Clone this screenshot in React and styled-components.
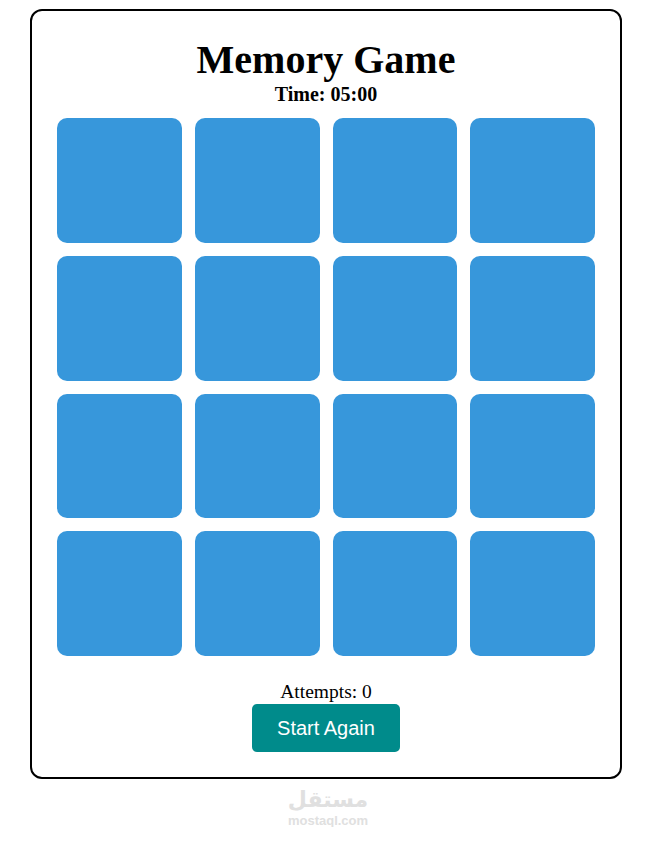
import React, { useState } from 'react'
import styled, { createGlobalStyle } from 'styled-components'

const GlobalStyle = createGlobalStyle`
  html, body {
    margin: 0;
    padding: 0;
    background: #ffffff;
    font-family: "Liberation Serif", "Times New Roman", serif;
  }
`

const Board = styled.main`
  box-sizing: border-box;
  width: 592px;
  margin: 9px 34px 0 30px;
  padding: 27px 25px 25px;
  border: 2px solid #000000;
  border-radius: 12px;
  display: flex;
  flex-direction: column;
  align-items: center;
`

const Title = styled.h1`
  margin: 0;
  font-size: 40px;
  line-height: 44px;
  font-weight: bold;
  color: #000000;
`

const Timer = styled.h3`
  margin: 0 0 12px;
  font-size: 20px;
  line-height: 24px;
  font-weight: bold;
`

const Grid = styled.div`
  width: 100%;
  display: grid;
  grid-template-columns: repeat(4, 1fr);
  gap: 13px;
`

const Card = styled.div`
  aspect-ratio: 1 / 1;
  border-radius: 10px;
  background: ${(p) => (p.$open ? '#ffffff' : '#3797db')};
  cursor: pointer;
`

const Attempts = styled.p`
  margin: 25px 0 1px;
  font-size: 19.5px;
  line-height: 22px;
`

const Button = styled.button`
  width: 148px;
  height: 48px;
  border: none;
  border-radius: 5px;
  background: #008b8b;
  color: #ffffff;
  font-family: "Liberation Sans", Arial, sans-serif;
  font-size: 20px;
  cursor: pointer;
`

const Watermark = styled.div`
  margin-top: 8px;
  display: flex;
  flex-direction: column;
  align-items: center;
  color: #e0e0e0;
  font-family: "DejaVu Sans", "Liberation Sans", sans-serif;
  font-weight: bold;
  user-select: none;
`

const Arabic = styled.span`
  font-size: 22px;
  line-height: 26px;
`

const Domain = styled.span`
  margin-top: 1px;
  font-family: "Liberation Sans", Arial, sans-serif;
  font-size: 13px;
  line-height: 13px;
`

export default function App() {
  const [attempts, setAttempts] = useState(0)
  const cards = Array.from({ length: 16 }, (_, i) => i)

  return (
    <>
      <GlobalStyle />
      <Board>
        <Title>Memory Game</Title>
        <Timer>Time: 05:00</Timer>
        <Grid>
          {cards.map((i) => (
            <Card key={i} />
          ))}
        </Grid>
        <Attempts>Attempts: {attempts}</Attempts>
        <Button onClick={() => setAttempts(0)}>Start Again</Button>
      </Board>
      <Watermark>
        <Arabic dir="rtl">مستقل</Arabic>
        <Domain>mostaql.com</Domain>
      </Watermark>
    </>
  )
}
